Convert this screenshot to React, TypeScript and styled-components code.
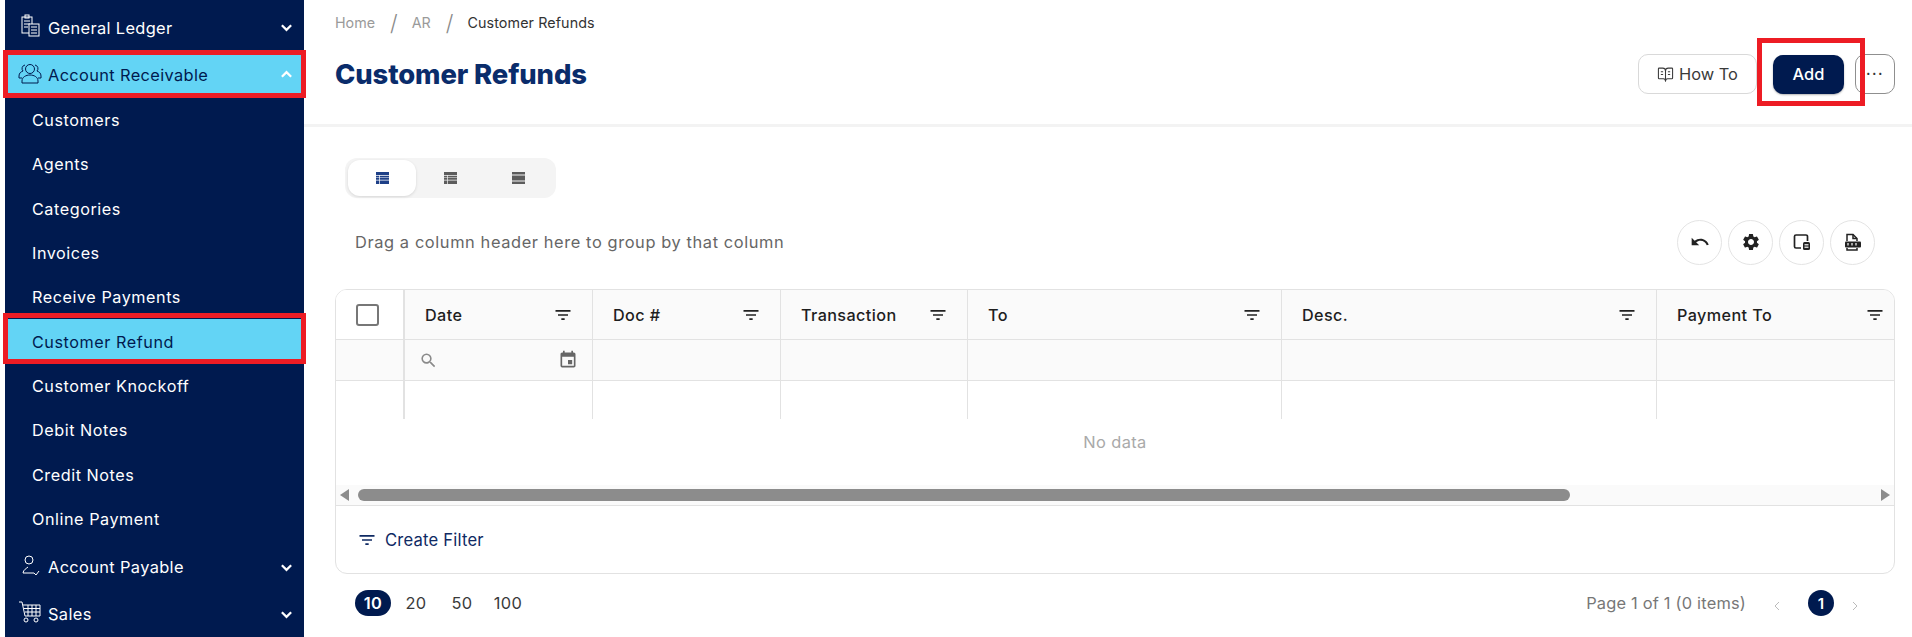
import styled, { createGlobalStyle } from 'styled-components'
import { MdEvent, MdFilterList, MdSearch, MdSettings, MdUndo } from 'react-icons/md'
import { LuBookOpenText } from 'react-icons/lu'

const FONT = `Inter, "Liberation Sans", sans-serif`
const NAVY = '#001a4f'
const CYAN = '#63d4f5'
const RED = '#ed1c24'
const LINE = '#e2e2e2'

const GlobalStyle = createGlobalStyle`
  html, body {
    margin: 0;
    padding: 0;
    background: #fff;
    overflow: hidden;
  }
  body {
    font-family: ${FONT};
  }
`

const Page = styled.div`
  display: flex;
  width: 1912px;
  height: 637px;
  overflow: hidden;
  padding-left: 5px;
  box-sizing: border-box;
`

const Sidebar = styled.nav`
  width: 299px;
  flex: none;
  background-color: ${NAVY};
  padding-top: 4px;
  box-sizing: border-box;
`

const SubList = styled.div`
  padding-bottom: 3px;
`

const Flagged = styled.div<{ $top: number; $bottom: number }>`
  position: relative;
  &::after {
    content: '';
    position: absolute;
    box-sizing: border-box;
    top: ${p => p.$top}px;
    bottom: ${p => p.$bottom}px;
    left: -2px;
    right: -2px;
    border: 5px solid ${RED};
    pointer-events: none;
  }
`

const MenuRow = styled.div<{ $active?: boolean }>`
  height: 47px;
  display: flex;
  align-items: center;
  padding: 0 11px 0 13px;
  color: ${p => (p.$active ? NAVY : '#fff')};
  background-color: ${p => (p.$active ? CYAN : 'transparent')};
  font-size: 16.4px;
  font-weight: 400;
  letter-spacing: 0.35px;
`

const MenuIcon = styled.svg`
  width: 24px;
  height: 24px;
  margin-right: 6px;
  margin-top: -4px;
  flex: none;
  fill: none;
  stroke: currentColor;
  stroke-width: 1;
`

const MenuLabel = styled.span`
  flex: 1;
`

const Chevron = styled.svg`
  width: 13px;
  height: 13px;
  fill: none;
  stroke: #fff;
  stroke-width: 2.4;
`

const SubRow = styled.div<{ $active?: boolean }>`
  height: 44.3px;
  display: flex;
  align-items: center;
  padding-left: 27px;
  color: ${p => (p.$active ? NAVY : '#fff')};
  background-color: ${p => (p.$active ? CYAN : 'transparent')};
  font-size: 16.2px;
  font-weight: 400;
  letter-spacing: 0.55px;
`

const Main = styled.main`
  flex: 1;
  min-width: 0;
`

const Header = styled.header`
  height: 127px;
  padding: 14px 17px 0 31px;
  box-sizing: border-box;
  border-bottom: 3px solid #f3f3f3;
`

const Crumbs = styled.div`
  display: flex;
  align-items: center;
  height: 17px;
  font-size: 14.3px;
  color: #9a9a9a;
`

const CrumbSep = styled.span`
  font-size: 22px;
  font-weight: 300;
  color: #8a8a8a;
  margin: 0 14px 0 15px;
`

const CrumbCurrent = styled.span`
  color: #333;
  letter-spacing: 0.1px;
`

const TitleRow = styled.div`
  display: flex;
  align-items: center;
  justify-content: space-between;
  margin-top: 23px;
`

const Title = styled.h1`
  margin: 0;
  font-size: 27.4px;
  font-weight: 800;
  color: #0a2c6b;
  letter-spacing: -0.1px;
`

const Actions = styled.div`
  display: flex;
  align-items: center;
`

const HowToButton = styled.button`
  width: 119px;
  height: 40px;
  display: flex;
  align-items: center;
  justify-content: center;
  gap: 5px;
  background: #fff;
  border: 1px solid #d9d9d9;
  border-radius: 10px;
  font: 400 16.4px ${FONT};
  color: #3a3a3a;
`

const AddButton = styled.button`
  position: relative;
  width: 71px;
  height: 39px;
  margin-left: 16px;
  background: ${NAVY};
  border: none;
  border-radius: 10px;
  color: #fff;
  font: 500 16.4px ${FONT};
  box-shadow: 0 1px 2px rgba(0, 0, 0, 0.3);
  &::after {
    content: '';
    position: absolute;
    z-index: 2;
    inset: -17px -21px -12px -16px;
    border: 5px solid ${RED};
  }
`

const MoreButton = styled.button`
  width: 40px;
  height: 40px;
  margin-left: 11px;
  padding: 0 0 10px;
  background: #fff;
  border: 1px solid #8f8f8f;
  border-radius: 10px;
  font: 500 15px ${FONT};
  letter-spacing: 1.5px;
  color: #333;
`

const Content = styled.div`
  padding: 31px 17px 0 31px;
`

const Segments = styled.div`
  width: 211px;
  height: 40px;
  margin-left: 10px;
  padding: 2px 3px;
  box-sizing: border-box;
  display: flex;
  background: #f4f4f4;
  border-radius: 12px;
`

const Segment = styled.div<{ $active?: boolean }>`
  width: 68px;
  display: flex;
  align-items: center;
  justify-content: center;
  border-radius: 12px;
  background: ${p => (p.$active ? '#fff' : 'transparent')};
  box-shadow: ${p => (p.$active ? '0 1px 3px rgba(0,0,0,0.12)' : 'none')};
  color: ${p => (p.$active ? '#1d3f87' : '#5c5c5c')};
`

const Toolbar = styled.div`
  height: 46px;
  margin-top: 21px;
  padding: 0 20px;
  display: flex;
  align-items: center;
  justify-content: space-between;
  font-size: 16.4px;
  letter-spacing: 0.6px;
  color: #666;
`

const RoundButtons = styled.div`
  display: flex;
  gap: 6px;
`

const RoundButton = styled.div`
  width: 45px;
  height: 45px;
  box-sizing: border-box;
  display: flex;
  align-items: center;
  justify-content: center;
  border: 1px solid #e4e4e4;
  border-radius: 50%;
  color: #222;
`

const Table = styled.div`
  margin-top: 24px;
  border: 1px solid ${LINE};
  border-radius: 12px;
  height: 285px;
  box-sizing: border-box;
  overflow: hidden;
`

const GridRow = styled.div<{ $height: number; $shaded?: boolean }>`
  display: grid;
  grid-template-columns: 69px 188px 188px 187px 314px 375px 1fr;
  height: ${p => p.$height}px;
  box-sizing: border-box;
  border-bottom: ${p => (p.$shaded ? `1px solid ${LINE}` : 'none')};
  background: ${p => (p.$shaded ? '#fafafa' : '#fff')};
`

const Cell = styled.div<{ $first?: boolean; $last?: boolean }>`
  display: flex;
  align-items: center;
  justify-content: space-between;
  box-sizing: border-box;
  padding: 0 ${p => (p.$last ? 9 : 19)}px 0 20px;
  border-right: ${p => (p.$last ? 'none' : p.$first ? `2px solid ${LINE}` : `1px solid ${LINE}`)};
`

const CheckCell = styled(Cell)`
  justify-content: center;
  padding: 0 5px 0 0;
  background: #fff;
`

const DateFilterCell = styled(Cell)`
  padding: 0 14px 0 14px;
`

const ColumnName = styled.span`
  font-size: 16.2px;
  font-weight: 500;
  letter-spacing: 0.4px;
  color: #1e1e1e;
`

const FilterIcon = styled(MdFilterList)`
  color: #222;
  flex: none;
`

const Checkbox = styled.div`
  width: 23px;
  height: 22px;
  box-sizing: border-box;
  border: 2px solid #777;
  border-radius: 3px;
`

const NoData = styled.div`
  height: 66px;
  padding-bottom: 20px;
  box-sizing: border-box;
  display: flex;
  align-items: center;
  justify-content: center;
  font-size: 16.4px;
  letter-spacing: 0.4px;
  color: #a9a9a9;
`

const ScrollBar = styled.div`
  height: 20px;
  display: flex;
  align-items: center;
  padding: 0 4px;
  gap: 9px;
  background: #fafafa;
  border-bottom: 1px solid ${LINE};
`

const Arrow = styled.div<{ $right?: boolean }>`
  flex: none;
  width: 0;
  height: 0;
  border-top: 6px solid transparent;
  border-bottom: 6px solid transparent;
  ${p => (p.$right ? 'border-left: 9px solid #8c8c8c;' : 'border-right: 9px solid #8c8c8c;')}
`

const ScrollTrack = styled.div`
  flex: 1;
`

const ScrollThumb = styled.div`
  width: 1212px;
  height: 12px;
  border-radius: 6px;
  background: #8c8c8c;
`

const CreateFilter = styled.div`
  height: 68px;
  padding-left: 21px;
  display: flex;
  align-items: center;
  gap: 8px;
  font-size: 16.6px;
  letter-spacing: 0.2px;
  color: #0f2a63;
`

const Pager = styled.div`
  height: 52px;
  padding: 3px 36px 0 20px;
  display: flex;
  align-items: center;
  justify-content: space-between;
  font-size: 16.4px;
  color: #3a3a3a;
`

const PageSizes = styled.div`
  display: flex;
  align-items: center;
`

const PageSize = styled.span<{ $active?: boolean }>`
  min-width: 36px;
  height: 26px;
  margin-right: ${p => (p.$active ? 7 : 10)}px;
  display: flex;
  align-items: center;
  justify-content: center;
  border-radius: 13px;
  background: ${p => (p.$active ? NAVY : 'transparent')};
  color: ${p => (p.$active ? '#fff' : '#3a3a3a')};
  font-weight: ${p => (p.$active ? 600 : 400)};
  letter-spacing: 0.4px;
`

const PageNav = styled.div`
  display: flex;
  align-items: center;
  color: #777;
`

const PageInfo = styled.span`
  margin-right: 27px;
  letter-spacing: 0.2px;
`

const PageButton = styled.span`
  width: 26px;
  height: 26px;
  margin: 0 17px 0 27px;
  display: flex;
  align-items: center;
  justify-content: center;
  border-radius: 50%;
  background: ${NAVY};
  color: #fff;
  font-weight: 600;
  font-size: 15px;
`

const PageArrow = styled.svg`
  width: 8px;
  height: 10px;
  margin-top: 5px;
  fill: none;
  stroke: #bbb;
  stroke-width: 1;
`

const LedgerIcon = () => (
  <MenuIcon viewBox="0 0 24 24">
    <rect x="4" y="3" width="10" height="16" />
    <rect x="7" y="1" width="4" height="3" />
    <path d="M6 7h6M6 10h6M6 13h4" />
    <rect x="11" y="10" width="10" height="12" fill="#001a4f" />
    <path d="M13 13h6M13 16h6M13 19h6" />
  </MenuIcon>
)

const UsersIcon = () => (
  <MenuIcon viewBox="0 0 24 24">
    <circle cx="12" cy="8" r="4.5" />
    <path d="M4 20c0-4 4-6 8-6s8 2 8 6v2H4z" />
    <path d="M7 4a3.6 3.6 0 0 0-2 6c-2 .8-4 2-4 5v2h3M17 4a3.600 3.600 0 0 1 2 6c2 .8 4 2 4 5v2h-3" />
  </MenuIcon>
)

const PayableIcon = () => (
  <MenuIcon viewBox="0 0 24 24">
    <circle cx="11" cy="7" r="4" />
    <path d="M16 20H5c0-3 4-5 5-6" />
    <path d="M16 20l2 2 3-4" />
  </MenuIcon>
)

const CartIcon = () => (
  <MenuIcon viewBox="0 0 24 24">
    <path d="M1 2h3l3 14h15V5H5M6 8.500h16M7 12h15M10 5v11M14 5v11M18 5v11" />
    <circle cx="8" cy="20" r="2" />
    <circle cx="18" cy="20" r="2" />
  </MenuIcon>
)

const ChevronIcon = ({ up }: { up?: boolean }) => (
  <Chevron viewBox="0 0 14 14">
    <path d={up ? 'M2 9.500l5-5 5 5' : 'M2 4.500l5 5 5-5'} />
  </Chevron>
)

const TableViewIcon = () => (
  <svg width="13" height="12" viewBox="0 0 13 12" fill="currentColor">
    <path d="M0 0h13v3H0zM0 3.700h3.200v1.700H0zM3.900 3.700H13v1.700H3.900zM0 6.100h3.200v1.700H0zM3.900 6.100H13v1.700H3.900zM0 8.500h3.200V12H0zM3.900 8.500H13V12H3.900z" />
  </svg>
)

const DenseViewIcon = () => (
  <svg width="13" height="12" viewBox="0 0 13 12" fill="currentColor">
    <path d="M0 0h13v2.500H0zM0 3.500h13v5H0zM0 9.500h13V12H0z" />
  </svg>
)

const ExportGridIcon = () => (
  <svg width="20" height="20" viewBox="0 0 20 20" fill="none" stroke="currentColor" strokeWidth="1.700">
    <path d="M9 16H4a1.500 1.500 0 0 1-1.500-1.500v-10A1.500 1.500 0 0 1 4 3h10a1.500 1.500 0 0 1 1.500 1.500V9" />
    <rect x="11" y="10" width="7" height="8" rx="1.500" fill="currentColor" stroke="none" />
    <path d="M12.500 12.500h4M12.500 14h4M12.500 15.500h4" stroke="#fff" strokeWidth="0.800" />
  </svg>
)

const ExportPdfIcon = () => (
  <svg width="20" height="20" viewBox="0 0 20 20" fill="none" stroke="currentColor" strokeWidth="1.500">
    <path d="M4 9V2.500h6L14 6.500V9M4 16v2h10v-2" />
    <path d="M10 2.500v4h4" />
    <rect x="2" y="9.500" width="16" height="6" rx="1" fill="currentColor" stroke="none" />
    <path d="M5 11v2.500M9 11v2.500M13 11v2.500" stroke="#fff" strokeWidth="1.200" />
  </svg>
)

const subItems = [
  'Customers',
  'Agents',
  'Categories',
  'Invoices',
  'Receive Payments',
  'Customer Refund',
  'Customer Knockoff',
  'Debit Notes',
  'Credit Notes',
  'Online Payment',
]

const columns = ['Date', 'Doc #', 'Transaction', 'To', 'Desc.', 'Payment To']

const App = () => {
  const isLast = (i: number) => columns.length - 1 === i

  return (
    <>
      <GlobalStyle />
      <Page>
        <Sidebar>
          <MenuRow>
            <LedgerIcon />
            <MenuLabel>General Ledger</MenuLabel>
            <ChevronIcon />
          </MenuRow>
          <Flagged $top={-1} $bottom={0}>
            <MenuRow $active>
              <UsersIcon />
              <MenuLabel>Account Receivable</MenuLabel>
              <ChevronIcon up />
            </MenuRow>
          </Flagged>
          <SubList>
            {subItems.map(item =>
              item === 'Customer Refund' ? (
                <Flagged key={item} $top={-6} $bottom={0}>
                  <SubRow $active>{item}</SubRow>
                </Flagged>
              ) : (
                <SubRow key={item}>{item}</SubRow>
              ),
            )}
          </SubList>
          <MenuRow>
            <PayableIcon />
            <MenuLabel>Account Payable</MenuLabel>
            <ChevronIcon />
          </MenuRow>
          <MenuRow>
            <CartIcon />
            <MenuLabel>Sales</MenuLabel>
            <ChevronIcon />
          </MenuRow>
        </Sidebar>
        <Main>
          <Header>
            <Crumbs>
              Home
              <CrumbSep>/</CrumbSep>
              AR
              <CrumbSep>/</CrumbSep>
              <CrumbCurrent>Customer Refunds</CrumbCurrent>
            </Crumbs>
            <TitleRow>
              <Title>Customer Refunds</Title>
              <Actions>
                <HowToButton>
                  <LuBookOpenText size={17} strokeWidth={1.5} />
                  How To
                </HowToButton>
                <AddButton>Add</AddButton>
                <MoreButton>...</MoreButton>
              </Actions>
            </TitleRow>
          </Header>
          <Content>
            <Segments>
              <Segment $active><TableViewIcon /></Segment>
              <Segment><TableViewIcon /></Segment>
              <Segment><DenseViewIcon /></Segment>
            </Segments>
            <Toolbar>
              Drag a column header here to group by that column
              <RoundButtons>
                <RoundButton><MdUndo size={20} /></RoundButton>
                <RoundButton><MdSettings size={20} /></RoundButton>
                <RoundButton><ExportGridIcon /></RoundButton>
                <RoundButton><ExportPdfIcon /></RoundButton>
              </RoundButtons>
            </Toolbar>
            <Table>
              <GridRow $height={50} $shaded>
                <CheckCell $first><Checkbox /></CheckCell>
                {columns.map((c, i) => (
                  <Cell key={c} $last={isLast(i)}>
                    <ColumnName>{c}</ColumnName>
                    <FilterIcon size={20} />
                  </Cell>
                ))}
              </GridRow>
              <GridRow $height={41} $shaded>
                <Cell $first />
                <DateFilterCell>
                  <MdSearch size={19} color="#8a8a8a" />
                  <MdEvent size={20} color="#666" />
                </DateFilterCell>
                {columns.slice(1).map((c, i) => (
                  <Cell key={c} $last={isLast(i + 1)} />
                ))}
              </GridRow>
              <GridRow $height={38}>
                <Cell $first />
                {columns.map((c, i) => (
                  <Cell key={c} $last={isLast(i)} />
                ))}
              </GridRow>
              <NoData>No data</NoData>
              <ScrollBar>
                <Arrow />
                <ScrollTrack>
                  <ScrollThumb />
                </ScrollTrack>
                <Arrow $right />
              </ScrollBar>
              <CreateFilter>
                <MdFilterList size={20} />
                Create Filter
              </CreateFilter>
            </Table>
            <Pager>
              <PageSizes>
                <PageSize $active>10</PageSize>
                <PageSize>20</PageSize>
                <PageSize>50</PageSize>
                <PageSize>100</PageSize>
              </PageSizes>
              <PageNav>
                <PageInfo>Page 1 of 1 (0 items)</PageInfo>
                <PageArrow viewBox="0 0 8 10"><path d="M6 1L2 5l4 4" /></PageArrow>
                <PageButton>1</PageButton>
                <PageArrow viewBox="0 0 8 10"><path d="M2 1l4 4-4 4" /></PageArrow>
              </PageNav>
            </Pager>
          </Content>
        </Main>
      </Page>
    </>
  )
}

export default App
